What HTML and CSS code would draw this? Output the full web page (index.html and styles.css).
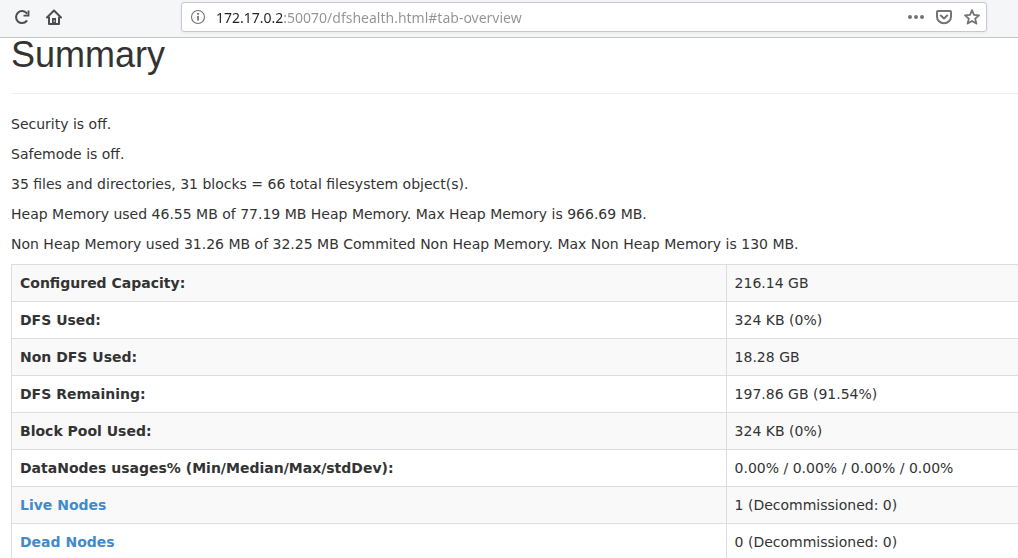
FILE: index.html
```
<!DOCTYPE html>
<html lang="en">
<head>
  <meta charset="UTF-8">
  <meta name="viewport" content="width=device-width, initial-scale=1.0">
  <link rel="stylesheet" href="styles.css">
  <title>Namenode information</title>
</head>
<body>

<header class="toolbar">
  <div class="toolbar-nav">
    <button type="button" class="icon-button" aria-label="Reload">
      <svg width="16" height="16" viewBox="0 0 16 16" fill="none" stroke="#4c4d4f" stroke-width="2">
        <path d="M12.6 12A6 6 0 1 1 12.6 4.2" stroke-linecap="round"/>
        <path d="M14.5 1.5v5.2H9.5" stroke-width="1.8"/>
      </svg>
    </button>
    <button type="button" class="icon-button" aria-label="Home">
      <svg width="16" height="16" viewBox="0 0 16 16" fill="none" stroke="#4c4d4f" stroke-width="2" stroke-linecap="round" stroke-linejoin="round">
        <path d="M1 8.5L8 1.5l7 7"/>
        <path d="M3 8.5V15h10V8.5"/>
        <path d="M6 15V9h4v6z" fill="#4c4d4f" stroke="none"/>
        <path d="M8.2 11.6v1" stroke="#f5f6f7" stroke-width="1"/>
      </svg>
    </button>
  </div>

  <div class="url-bar">
    <button type="button" class="icon-button" aria-label="Site information">
      <svg width="16" height="16" viewBox="0 0 16 16" fill="none" stroke="#737373">
        <circle cx="8" cy="8" r="6.5" stroke-width="1.1"/>
        <path d="M8 7v4.5" stroke-width="1.8"/>
        <circle cx="8" cy="4.8" r="1.1" fill="#737373" stroke="none"/>
      </svg>
    </button>
    <input type="text" class="url-input" aria-label="Address" value="172.17.0.2:50070/dfshealth.html#tab-overview">
    <div class="url-actions">
      <button type="button" class="icon-button" aria-label="Page actions">
        <svg width="16" height="16" viewBox="0 0 16 16" fill="#737373">
          <circle cx="2" cy="8" r="2"/>
          <circle cx="8" cy="8" r="2"/>
          <circle cx="14" cy="8" r="2"/>
        </svg>
      </button>
      <button type="button" class="icon-button" aria-label="Save to Pocket">
        <svg width="16" height="16" viewBox="0 0 16 16" fill="none" stroke="#737373" stroke-width="2" stroke-linecap="round" stroke-linejoin="round">
          <path d="M2 2h12a1 1 0 0 1 1 1v4.5a7 6.8 0 0 1-14 0V3a1 1 0 0 1 1-1z"/>
          <path d="M4.8 6.5L8 9.5l3.2-3"/>
        </svg>
      </button>
      <button type="button" class="icon-button" aria-label="Bookmark this page">
        <svg width="16" height="16" viewBox="0 0 16 16" fill="none" stroke="#737373" stroke-width="1.8" stroke-linejoin="round">
          <path d="M8 1.2l2 4.6 5 .5-3.8 3.3 1.2 5L8 12l-4.4 2.6 1.2-5L1 6.3l5-.5z"/>
        </svg>
      </button>
    </div>
  </div>
</header>

<main class="content">
  <div class="page-header">
    <h1>Summary</h1>
  </div>

  <p>Security is off.</p>
  <p>Safemode is off.</p>
  <p>35 files and directories, 31 blocks = 66 total filesystem object(s).</p>
  <p>Heap Memory used 46.55 MB of 77.19 MB Heap Memory. Max Heap Memory is 966.69 MB.</p>
  <p>Non Heap Memory used 31.26 MB of 32.25 MB Commited Non Heap Memory. Max Non Heap Memory is 130 MB.</p>

  <table class="summary-table">
    <tbody>
      <tr><th scope="row">Configured Capacity:</th><td>216.14 GB</td></tr>
      <tr><th scope="row">DFS Used:</th><td>324 KB (0%)</td></tr>
      <tr><th scope="row">Non DFS Used:</th><td>18.28 GB</td></tr>
      <tr><th scope="row">DFS Remaining:</th><td>197.86 GB (91.54%)</td></tr>
      <tr><th scope="row">Block Pool Used:</th><td>324 KB (0%)</td></tr>
      <tr><th scope="row">DataNodes usages% (Min/Median/Max/stdDev):</th><td>0.00% / 0.00% / 0.00% / 0.00%</td></tr>
      <tr><th scope="row"><a href="#tab-datanode">Live Nodes</a></th><td>1 (Decommissioned: 0)</td></tr>
      <tr><th scope="row"><a href="#tab-datanode">Dead Nodes</a></th><td>0 (Decommissioned: 0)</td></tr>
    </tbody>
  </table>
</main>

</body>
</html>
```
FILE: styles.css
```
* {
  box-sizing: border-box;
}

body {
  margin: 0;
  font-family: "DejaVu Sans", sans-serif;
  font-size: 14px;
  line-height: 20px;
  color: #333;
  background-color: #fff;
}

/* Browser toolbar */
.toolbar {
  display: flex;
  align-items: flex-start;
  padding: 2px 31px 2px 14px;
  background-color: #f5f6f7;
  border-bottom: 1px solid #c3c3c9;
}

.toolbar-nav {
  display: flex;
  gap: 16px;
  width: 167px;
  padding-top: 7px;
}

.icon-button {
  display: flex;
  padding: 0;
  border: none;
  background: none;
  cursor: pointer;
}

.url-bar {
  flex: 1;
  display: flex;
  align-items: center;
  height: 30px;
  margin-bottom: 3px;
  padding: 0 6px 0 8px;
  background-color: #fff;
  border: 1px solid #c8c8ce;
  border-radius: 3px;
  box-shadow: 0 1px 3px rgba(0, 0, 0, 0.06);
}

/* The host is dark, the rest of the address is grey */
.url-input {
  flex: 1;
  min-width: 0;
  height: 24px;
  margin-left: 10px;
  padding: 0;
  border: none;
  outline: none;
  font-family: "Noto Sans", sans-serif;
  font-size: 14px;
  color: transparent;
  caret-color: #222;
  background: linear-gradient(to right, #222 68px, #939393 68px);
  -webkit-background-clip: text;
  background-clip: text;
}

.url-actions {
  display: flex;
  gap: 12px;
}

/* Overview page */
.content {
  padding-left: 11px;
}

.page-header {
  margin-bottom: 20px;
  padding-bottom: 21px;
  border-bottom: 1px solid #eee;
}

h1 {
  margin: 0;
  font-family: "Liberation Sans", Arial, sans-serif;
  font-size: 36px;
  font-weight: 500;
  line-height: 34px;
}

p {
  margin: 0 0 10px;
}

.summary-table {
  width: 100%;
  border-collapse: collapse;
  border: 1px solid #ddd;
  border-right: none;
}

.summary-table th,
.summary-table td {
  padding: 8px;
  border-top: 1px solid #ddd;
  text-align: left;
}

.summary-table th {
  width: 71%;
  border-right: 1px solid #ddd;
}

.summary-table tr:nth-child(odd) {
  background-color: #f9f9f9;
}

a {
  color: #428bca;
  text-decoration: none;
}

a:hover {
  text-decoration: underline;
}
```
